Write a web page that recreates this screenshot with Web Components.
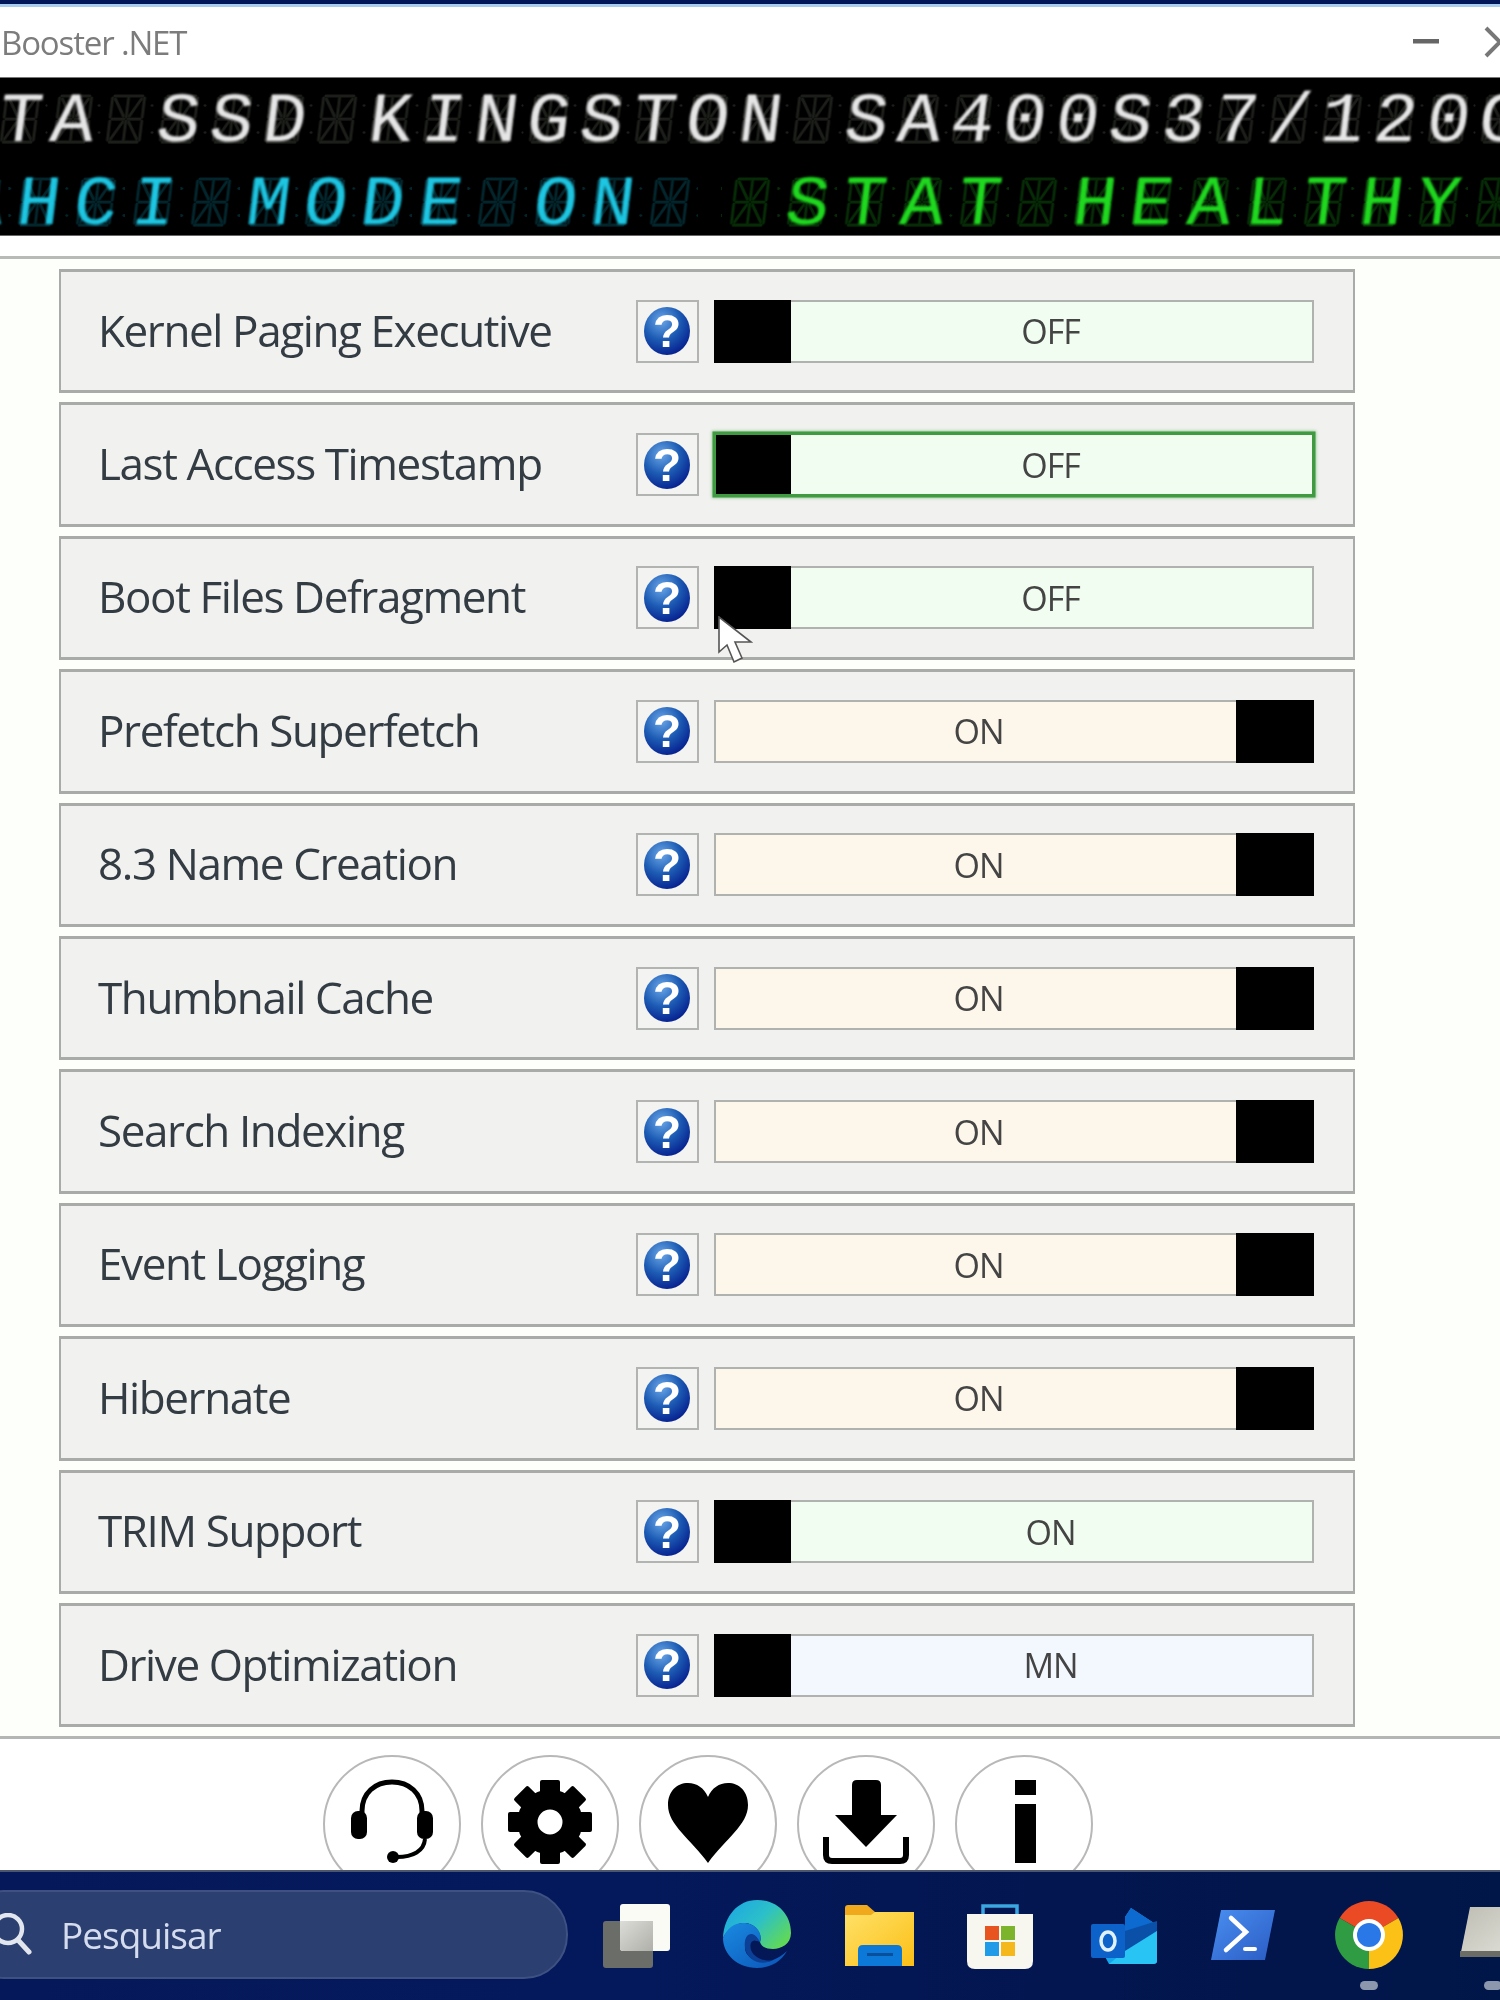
<!DOCTYPE html>
<html lang="en">
<head>
<meta charset="utf-8">
<title>SSD Booster .NET</title>
<style>
  html, body { margin: 0; padding: 0; background: #fdfffb; }
  body {
    width: 1500px;
    height: 2000px;
    overflow: hidden;
    display: flex;
    flex-direction: column;
    font-family: "Open Sans", "Liberation Sans", sans-serif;
  }
  app-window { flex: 1; min-height: 0; }
</style>
</head>
<body>
<app-window>
  <title-bar>Booster .NET</title-bar>
  <lcd-panel></lcd-panel>
  <tweak-row label="Kernel Paging Executive" state="left" tint="green" value="OFF"></tweak-row>
  <tweak-row label="Last Access Timestamp" state="left" tint="green" value="OFF" focused></tweak-row>
  <tweak-row label="Boot Files Defragment" state="left" tint="green" value="OFF"></tweak-row>
  <tweak-row label="Prefetch Superfetch" state="right" tint="orange" value="ON"></tweak-row>
  <tweak-row label="8.3 Name Creation" state="right" tint="orange" value="ON"></tweak-row>
  <tweak-row label="Thumbnail Cache" state="right" tint="orange" value="ON"></tweak-row>
  <tweak-row label="Search Indexing" state="right" tint="orange" value="ON"></tweak-row>
  <tweak-row label="Event Logging" state="right" tint="orange" value="ON"></tweak-row>
  <tweak-row label="Hibernate" state="right" tint="orange" value="ON"></tweak-row>
  <tweak-row label="TRIM Support" state="left" tint="green" value="ON"></tweak-row>
  <tweak-row label="Drive Optimization" state="left" tint="blue" value="MN"></tweak-row>
  <tool-bar slot="footer"></tool-bar>
</app-window>
<task-bar></task-bar>
<mouse-pointer></mouse-pointer>

<script>
class AppWindow extends HTMLElement {
  constructor() {
    super();
    const shadow = this.attachShadow({ mode: 'open' });
    shadow.innerHTML = `
    <style>
      :host { display: flex; flex-direction: column; overflow: hidden; background: #fdfffb; }
      .rows {
        display: flex;
        flex-direction: column;
        gap: 9px;
        width: 1296px;
        margin: 10px 0 0 59px;
      }
      .foot { margin-top: 9px; border-top: 3px solid #b4b6b4; background: #fff; flex: 1; overflow: hidden; }
      .rule { height: 20px; border-bottom: 3px solid #b8bab8; background: #fff; }
    </style>
    <slot name="head"></slot>
    <div class="rule"></div>
    <div class="rows"><slot></slot></div>
    <div class="foot"><slot name="footer"></slot></div>
    `;
  }
  connectedCallback() {
    this.querySelector('title-bar').slot = 'head';
    this.querySelector('lcd-panel').slot = 'head';
  }
}

class TitleBar extends HTMLElement {
  constructor() {
    super();
    const shadow = this.attachShadow({ mode: 'open' });
    shadow.innerHTML = `
    <style>
      :host { display: block; background: #fff; }
      .stripe { height: 4px; background: #02175a; border-bottom: 3px solid #a9cdf0; }
      .bar { height: 70px; display: flex; align-items: center; padding-left: 1px; overflow: hidden; }
      .name { flex: 1; font: 400 33px "Open Sans", sans-serif; color: #7c7c7c; letter-spacing: -1.15px; filter: blur(.5px); }
      svg { display: block; filter: blur(.5px); }
    </style>
    <div class="stripe"></div>
    <div class="bar">
      <span class="name"><slot></slot></span>
      <svg width="87" height="40" viewBox="0 0 87 40">
        <rect x="0" y="17" width="26" height="4.5" fill="#666"/>
        <path d="M73 6 L87 20 L73 34 M101 6 L87 20" fill="none" stroke="#777" stroke-width="4"/>
      </svg>
    </div>
    `;
  }
}

// all segments drawn, so it reads as the unlit "8 with a star" of a 14 segment cell
const GHOST_SEGMENTS = `
  <g fill="none" stroke-width="3" stroke-linecap="round">
    <path d="M6 3 H34 M6 26 H18 M22 26 H34 M6 49 H34"/>
    <path d="M4 5 V24 M4 28 V47 M36 5 V24 M36 28 V47 M20 5 V24 M20 28 V47"/>
    <path d="M7 6 L17 23 M33 6 L23 23 M7 46 L17 29 M33 46 L23 29"/>
  </g>`;

class LcdRun extends HTMLElement {
  constructor() {
    super();
    const shadow = this.attachShadow({ mode: 'open' });
    const text = this.getAttribute('text');
    const pitch = this.getAttribute('pitch');
    const lit = this.getAttribute('lit');
    const dim = this.getAttribute('dim');
    const cells = [...text].map(c => `
      <div class="cell">
        <svg viewBox="0 0 40 52" width="40" height="52" stroke="${dim}">${GHOST_SEGMENTS}</svg>
        ${c === ' ' ? '' : `<span>${c}</span>`}
      </div>`).join('');
    shadow.innerHTML = `
    <style>
      :host { display: flex; flex: none; }
      .cell {
        width: ${pitch}px;
        height: 54px;
        display: grid;
        place-items: center;
        background-image: radial-gradient(circle, ${dim} 1.1px, transparent 1.5px);
        background-size: ${pitch}px 27px;
        background-position: ${pitch / 2}px 0;
      }
      .cell > * { grid-area: 1 / 1; }
      svg { transform: skewX(-7deg); filter: blur(.7px); }
      span {
        font: 400 58px/38px "Liberation Mono", monospace;
        color: ${lit};
        transform: translateY(4.5px) skewX(-7deg) scale(1.25, 1.21);
        filter: blur(.7px);
      }
    </style>
    ${cells}
    `;
  }
}

class LcdPanel extends HTMLElement {
  constructor() {
    super();
    const shadow = this.attachShadow({ mode: 'open' });
    shadow.innerHTML = `
    <style>
      :host {
        display: flex;
        flex-direction: column;
        height: 159px;
        background: #000;
        border-top: 1px solid #777;
        border-bottom: 1px solid #666;
        overflow-x: clip;
        box-sizing: border-box;
        padding-top: 14px;
        gap: 29px;
      }
      .line { display: flex; }
      .one { margin-left: -6.5px; }
      .two { margin-left: -47.7px; gap: 23px; }
    </style>
    <div class="line one">
      <lcd-run text="TA SSD KINGSTON SA400S37/120G" pitch="52.9" lit="#e6e6e6" dim="#1c1e1a"></lcd-run>
    </div>
    <div class="line two">
      <lcd-run text="AHCI MODE ON " pitch="57.4" lit="#1dc6e2" dim="#03252c"></lcd-run>
      <lcd-run text=" STAT HEALTHY " pitch="57.4" lit="#1fd91f" dim="#062b06"></lcd-run>
    </div>
    `;
  }
}

class HelpButton extends HTMLElement {
  constructor() {
    super();
    const shadow = this.attachShadow({ mode: 'open' });
    shadow.innerHTML = `
    <style>
      :host {
        display: flex;
        flex: none;
        align-items: center;
        justify-content: center;
        box-sizing: border-box;
        width: 63px;
        height: 63px;
        border: 2px solid #b2b4b2;
        background: #f3f3f1;
      }
      svg { filter: blur(.5px); margin-right: 2px; }
      text { font: 700 46px "Liberation Sans", sans-serif; fill: #fff; }
    </style>
    <svg width="46" height="48" viewBox="0 0 46 48">
      <defs>
        <radialGradient id="ball" cx="38%" cy="28%" r="80%">
          <stop offset="0" stop-color="#6aa6e8"/>
          <stop offset=".5" stop-color="#1d5cb4"/>
          <stop offset="1" stop-color="#03188a"/>
        </radialGradient>
      </defs>
      <ellipse cx="23" cy="24" rx="23" ry="24" fill="url(#ball)"/>
      <text x="23" y="40" text-anchor="middle">?</text>
    </svg>
    `;
  }
}

class SlideToggle extends HTMLElement {
  constructor() {
    super();
    const shadow = this.attachShadow({ mode: 'open' });
    const tints = { green: '#f0fdf0', orange: '#fdf6ea', blue: '#f3f7fe' };
    const tint = tints[this.getAttribute('tint')];
    const right = this.getAttribute('state') === 'right';
    const focused = this.hasAttribute('focused');
    shadow.innerHTML = `
    <style>
      :host {
        display: flex;
        flex: none;
        flex-direction: ${right ? 'row-reverse' : 'row'};
        box-sizing: border-box;
        width: 600px;
        height: 63px;
        background: ${tint};
        border: 2px solid ${focused ? '#3f9a42' : '#b0b2b0'};
        ${focused ? 'box-shadow: 0 0 0 1.5px #3f9a42, 0 0 3px 2px #8fc890;' : ''}
      }
      .knob {
        flex: none;
        background: #000;
        width: ${focused ? 75 : right ? 78 : 77}px;
        margin: ${focused ? '0 -2px 0 0' : '-2px'};
      }
      .text {
        flex: 1;
        display: flex;
        align-items: center;
        justify-content: center;
        font: 400 34px "Open Sans", sans-serif;
        letter-spacing: -1px;
        color: #444;
        filter: blur(.4px);
        ${right ? 'padding-left: 3px;' : ''}
      }
    </style>
    <div class="knob"></div>
    <div class="text"><slot></slot></div>
    `;
  }
}

class TweakRow extends HTMLElement {
  constructor() {
    super();
    const shadow = this.attachShadow({ mode: 'open' });
    const attrs = ['state', 'tint', 'focused']
      .filter(a => this.hasAttribute(a))
      .map(a => `${a}="${this.getAttribute(a)}"`).join(' ');
    shadow.innerHTML = `
    <style>
      :host {
        display: flex;
        align-items: center;
        box-sizing: border-box;
        height: 124.4px;
        padding: 0 39px 0 37px;
        background: #f1f1ef;
        border: 2px solid #a9aba9;
        border-top-width: 3px;
        border-bottom-width: 3px;
      }
      .label {
        flex: 1;
        font: 400 44px "Open Sans", sans-serif;
        letter-spacing: -1.4px;
        line-height: 60px;
        margin-top: -3px;
        color: #333b43;
        filter: blur(.4px);
        white-space: nowrap;
      }
      help-button { margin-right: 15px; }
    </style>
    <span class="label">${this.getAttribute('label')}</span>
    <help-button></help-button>
    <slide-toggle ${attrs}>${this.getAttribute('value')}</slide-toggle>
    `;
  }
}

class RoundButton extends HTMLElement {
  constructor() {
    super();
    const shadow = this.attachShadow({ mode: 'open' });
    shadow.innerHTML = `
    <style>
      :host {
        display: block;
        flex: none;
        box-sizing: border-box;
        width: 138px;
        height: 138px;
        border: 2px solid #b8b8b8;
        border-radius: 50%;
        position: relative;
      }
      ::slotted(svg) { position: absolute; left: -2px; top: -2px; filter: blur(.5px); }
    </style>
    <slot></slot>
    `;
  }
}

const gearTeeth = [0, 45, 90, 135, 180, 225, 270, 315]
  .map(a => `<rect x="59" y="25" width="20" height="18" rx="2" transform="rotate(${a} 69 67)"/>`).join('');

class ToolBar extends HTMLElement {
  constructor() {
    super();
    const shadow = this.attachShadow({ mode: 'open' });
    const svg = inner => `<svg width="138" height="138" viewBox="0 0 138 138" xmlns="http://www.w3.org/2000/svg">${inner}</svg>`;
    shadow.innerHTML = `
    <style>
      :host {
        display: flex;
        justify-content: center;
        gap: 20px;
        width: 1416px;
        padding-top: 16px;
      }
    </style>
    <round-button>${svg(`
      <path d="M39 62 V56 C39 38 52 27 69 27 C86 27 99 38 99 56 V62" fill="none" stroke="#000" stroke-width="5"/>
      <rect x="28" y="56" width="16" height="28" rx="7"/>
      <rect x="94" y="56" width="16" height="28" rx="7"/>
      <path d="M102 84 C101 96 90 102 74 102" fill="none" stroke="#000" stroke-width="4"/>
      <circle cx="70" cy="102" r="6"/>`)}</round-button>
    <round-button>${svg(`
      ${gearTeeth}
      <circle cx="69" cy="67" r="22.5" fill="none" stroke="#000" stroke-width="20"/>`)}</round-button>
    <round-button>${svg(`
      <path d="M69 108 C52 84 29 70 29 50 C29 36 38 28 49 28 C58 28 65 33 69 42 C73 33 80 28 89 28 C100 28 109 36 109 50 C109 70 86 84 69 108Z"/>`)}</round-button>
    <round-button>${svg(`
      <path d="M55 30 Q55 25 60 25 H79 Q84 25 84 30 V60 H100 L69 92 L38 60 H55Z"/>
      <path d="M29 82 V100 Q29 106 35 106 H103 Q109 106 109 100 V82" fill="none" stroke="#000" stroke-width="6"/>`)}</round-button>
    <round-button>${svg(`
      <rect x="60" y="25" width="21" height="15"/>
      <rect x="60" y="49" width="21" height="59"/>`)}</round-button>
    `;
  }
}

const TASK_ICONS = {
  view: `<svg width="70" height="66" viewBox="0 0 70 66">
      <defs><linearGradient id="ov" x1="0" y1="0" x2="1" y2="1"><stop offset="0" stop-color="#dcdcd8"/><stop offset="1" stop-color="#b0b0aa"/></linearGradient></defs>
      <rect x="3" y="18" width="50" height="47" rx="3" fill="#6b6d68"/>
      <rect x="20" y="1" width="50" height="47" rx="3" fill="#fbfbf6"/>
      <path d="M20 18 H53 V48 H23 Q20 48 20 45Z" fill="url(#ov)"/>
    </svg>`,
  edge: `<svg width="68" height="68" viewBox="0 0 68 68">
      <defs>
        <linearGradient id="eg" x1="0" y1="0" x2="1" y2=".7"><stop offset="0" stop-color="#1aa3e8"/><stop offset=".55" stop-color="#2cc0c8"/><stop offset="1" stop-color="#5fd85a"/></linearGradient>
        <linearGradient id="eb" x1="0" y1="0" x2="1" y2="1"><stop offset="0" stop-color="#1a8ae0"/><stop offset="1" stop-color="#0a54b8"/></linearGradient>
      </defs>
      <path d="M34 0 C54 0 68 14 68 33 C68 44 58 49 50 49 C42 49 38 46 37 42 C40 34 32 22 20 23 C11 24 4 30 0 38 C1 16 15 0 34 0Z" fill="url(#eg)"/>
      <path d="M0 38 C4 28 12 22 22 23 C34 24 40 34 37 42 C30 38 22 40 22 48 C22 58 38 66 50 60 C55 58 60 55 64 51 C58 62 47 68 34 68 C14 68 0 54 0 38Z" fill="url(#eb)"/>
      <path d="M22 48 C20 34 30 28 37 42 C30 38 26 42 28 50 C31 58 42 62 50 60 C38 67 24 60 22 48Z" fill="#0c3f96"/>
    </svg>`,
  folder: `<svg width="70" height="64" viewBox="0 0 70 64">
      <defs><linearGradient id="fo" x1="0" y1="0" x2="1" y2="1"><stop offset="0" stop-color="#ffe168"/><stop offset="1" stop-color="#fbbf16"/></linearGradient></defs>
      <path d="M0 4 Q0 1 3 1 H22 L30 8 V14 H0Z" fill="#f0a81c"/>
      <path d="M0 11 H26 L30 8 H69 V62 H0Z" fill="url(#fo)"/>
      <path d="M13 62 V46 Q13 41 18 41 H52 Q57 41 57 46 V62Z" fill="#0c78d8"/>
      <rect x="22" y="49" width="26" height="3" fill="#0a4f9c"/>
    </svg>`,
  store: `<svg width="66" height="66" viewBox="0 0 66 66">
      <path d="M16 14 V3 H50 V14" fill="none" stroke="#3ba6e0" stroke-width="3.5"/>
      <path d="M0 11 H66 V58 Q66 66 58 66 H8 Q0 66 0 58Z" fill="#f7f6ef"/>
      <rect x="18" y="23" width="14" height="14" fill="#e8541f"/>
      <rect x="34" y="23" width="14" height="14" fill="#7cb52c"/>
      <rect x="18" y="39" width="14" height="14" fill="#1f9be8"/>
      <rect x="34" y="39" width="14" height="14" fill="#f4b81c"/>
    </svg>`,
  outlook: `<svg width="68" height="58" viewBox="0 0 68 58">
      <path d="M34 10 L40 1 L66 18 V54 Q66 57 62 57 H18 L12 46 L34 34Z" fill="#14a4ec"/>
      <path d="M34 10 L40 1 L66 18 L66 24 L34 48Z" fill="#0d6ad0"/>
      <path d="M34 24 L66 14 V24 L34 44Z" fill="#0a4fa8"/>
      <path d="M34 44 L66 24 V54 Q66 57 62 57 H18Z" fill="#28c4f4"/>
      <rect x="0" y="17" width="34" height="34" rx="2" fill="#0c62c8"/>
      <ellipse cx="17" cy="34" rx="7" ry="9" fill="none" stroke="#dff0ff" stroke-width="3.5"/>
    </svg>`,
  shell: `<svg width="66" height="52" viewBox="0 0 66 52">
      <defs><linearGradient id="ps" x1="0" y1="0" x2="1" y2="1"><stop offset="0" stop-color="#4a8ef0"/><stop offset="1" stop-color="#2a5cc4"/></linearGradient></defs>
      <path d="M11 1 H65 L55 51 H1Z" fill="url(#ps)"/>
      <path d="M21 9 L36 23 L16 41" fill="none" stroke="#fff" stroke-width="4.5" stroke-linecap="round"/>
      <rect x="33" y="38" width="14" height="4" rx="2" fill="#fff"/>
    </svg>`,
  chrome: `<svg width="68" height="68" viewBox="0 0 68 68">
      <path d="M34 34 L4.6 17 A34 34 0 0 1 63.4 17Z" fill="#ea4a24"/>
      <path d="M34 34 L4.6 17 A34 34 0 0 0 34 68Z" fill="#2f9c44"/>
      <path d="M34 34 L63.4 17 A34 34 0 0 1 34 68Z" fill="#fbc116"/>
      <circle cx="34" cy="34" r="16" fill="#fff"/>
      <circle cx="34" cy="34" r="12" fill="#2a78e8"/>
    </svg>`,
  drive: `<svg width="66" height="50" viewBox="0 0 66 50">
      <defs><linearGradient id="dr" x1="0" y1="0" x2="1" y2="1"><stop offset="0" stop-color="#bdbdb4"/><stop offset="1" stop-color="#e4e4dc"/></linearGradient></defs>
      <path d="M10 0 H66 V50 H0Z" fill="url(#dr)"/>
      <rect x="0" y="44" width="66" height="6" fill="#6c6c66"/>
    </svg>`
};

class TaskIcon extends HTMLElement {
  constructor() {
    super();
    const shadow = this.attachShadow({ mode: 'open' });
    const running = this.hasAttribute('running');
    const shift = this.getAttribute('shift') || 0;
    shadow.innerHTML = `
    <style>
      :host {
        display: flex;
        flex: none;
        flex-direction: column;
        align-items: center;
        justify-content: flex-start;
        width: 121.6px;
        height: 130px;
        padding-top: ${this.getAttribute('top')}px;
        box-sizing: border-box;
        transform: translateX(${shift}px);
      }
      svg { display: block; filter: blur(.5px); }
      .dot {
        position: absolute;
        top: 109px;
        width: 18px;
        height: 9px;
        border-radius: 5px;
        background: #8c97ad;
        display: ${running ? 'block' : 'none'};
      }
    </style>
    ${TASK_ICONS[this.getAttribute('name')]}
    <div class="dot"></div>
    `;
  }
}

class TaskBar extends HTMLElement {
  constructor() {
    super();
    const shadow = this.attachShadow({ mode: 'open' });
    shadow.innerHTML = `
    <style>
      :host {
        display: flex;
        flex: none;
        position: relative;
        height: 130px;
        box-sizing: border-box;
        background: linear-gradient(90deg, #05195a, #04195c 40%, #031650 70%, #011648);
        border-top: 2px solid #4b556e;
        overflow: hidden;
      }
      .search {
        flex: none;
        display: flex;
        align-items: center;
        box-sizing: border-box;
        width: 608px;
        height: 89px;
        margin: 18px 6.7px 0 -40px;
        padding-left: 40px;
        gap: 29px;
        border-radius: 44px;
        background: #2b3f70;
        border: 2px solid #3f5183;
      }
      .search svg { flex: none; margin-left: -2px; }
      .search span {
        font: 400 37px "Open Sans", sans-serif;
        letter-spacing: -1px;
        color: #d4dcee;
        filter: blur(.4px);
      }
    </style>
    <div class="search">
      <svg width="32" height="44" viewBox="0 0 32 44">
        <circle cx="8" cy="16" r="14" fill="none" stroke="#e2e6ef" stroke-width="4.5"/>
        <path d="M18 27 L29 39" stroke="#e2e6ef" stroke-width="5" stroke-linecap="round"/>
      </svg>
      <span>Pesquisar</span>
    </div>
    <task-icon name="view" top="31"></task-icon>
    <task-icon name="edge" top="28"></task-icon>
    <task-icon name="folder" top="32" shift="1"></task-icon>
    <task-icon name="store" top="31"></task-icon>
    <task-icon name="outlook" top="35" shift="3"></task-icon>
    <task-icon name="shell" top="37"></task-icon>
    <task-icon name="chrome" top="29" shift="4" running></task-icon>
    <task-icon name="drive" top="35" shift="6" running></task-icon>
    `;
  }
}

// mouse pointer lies over the third toggle
class MousePointer extends HTMLElement {
  constructor() {
    super();
    const shadow = this.attachShadow({ mode: 'open' });
    shadow.innerHTML = `
    <style>
      :host { position: absolute; left: 717px; top: 616px; display: block; width: 38px; height: 50px; }
      svg { filter: blur(.5px); }
    </style>
    <svg width="38" height="50" viewBox="0 0 38 50">
      <path d="M2 1 V36 L10 29 L17 46 L25 42 L18 26 L34 26Z" fill="#fff" stroke="#555" stroke-width="1.6"/>
    </svg>
    `;
  }
}

customElements.define('lcd-run', LcdRun);
customElements.define('lcd-panel', LcdPanel);
customElements.define('title-bar', TitleBar);
customElements.define('help-button', HelpButton);
customElements.define('slide-toggle', SlideToggle);
customElements.define('tweak-row', TweakRow);
customElements.define('round-button', RoundButton);
customElements.define('tool-bar', ToolBar);
customElements.define('task-icon', TaskIcon);
customElements.define('task-bar', TaskBar);
customElements.define('mouse-pointer', MousePointer);
customElements.define('app-window', AppWindow);
</script>
</body>
</html>
